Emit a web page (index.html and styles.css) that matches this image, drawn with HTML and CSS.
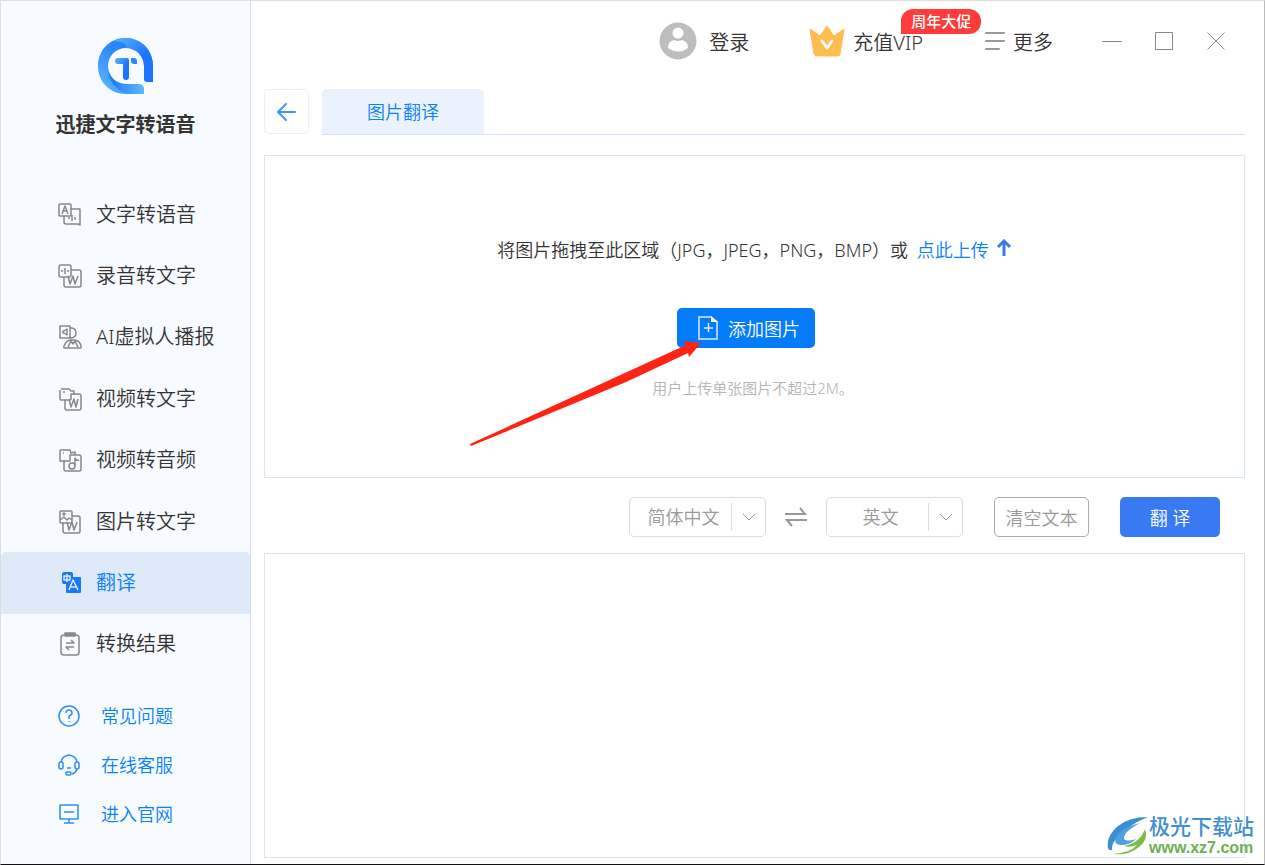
FILE: index.html
```html
<!DOCTYPE html>
<html lang="zh-CN">
<head>
<meta charset="utf-8">
<title>迅捷文字转语音</title>
<link rel="stylesheet" href="styles.css">
</head>
<body>
<div class="window">
  <aside class="sidebar">
    <div class="brand">
      <svg class="logo" viewBox="0 0 56 56" aria-hidden="true">
        <defs>
          <linearGradient id="ring" x1="0" y1="1" x2="1" y2="0">
            <stop offset="0" stop-color="#62bdff"/><stop offset=".55" stop-color="#2a86fa"/><stop offset="1" stop-color="#1b78fa"/>
          </linearGradient>
          <linearGradient id="cap" x1="0" y1="0" x2="1" y2="1">
            <stop offset="0" stop-color="#5ab6ff"/><stop offset=".6" stop-color="#1b74fb"/>
          </linearGradient>
          <linearGradient id="tail" x1="0" y1="0" x2="1" y2="0">
            <stop offset="0" stop-color="#1673fa"/><stop offset="1" stop-color="#60bbff"/>
          </linearGradient>
        </defs>
        <path fill="url(#ring)" d="M27 0C12 0 0 12 0 28s12 28 28 28h18v-4q0-6-6-6H28C18 46 10 38 10 28S18 10 28 10s18 8 18 18v13q0 3 4 3h5V28C55 12 43 0 27 0z"/>
        <path fill="url(#cap)" d="M16 3Q22 0 28 0c15 0 27 12 27 28v16h-5q-4 0-4-4V28c0-10-8-18-18-18Q30 4 16 3z"/>
        <path fill="url(#tail)" d="M10 30c1 9 8 16 18 16h12q6 0 6 6v4H29Q11 49 10 30z"/>
        <path fill="url(#cap)" d="M20 20h9q2 0 2 2v17q0 3-3 3t-3-3V26h-5q-3 0-3-3t3-3z"/>
        <path fill="#2e86fa" d="M33 20h3q3 0 3 3v3h-3q-3 0-3-3z"/>
      </svg>
      <h1 class="brand-name">迅捷文字转语音</h1>
    </div>
    <nav class="menu">
      <a class="item" href="#tts"><svg class="icon" viewBox="0 0 24 24"><rect x="1" y="1" width="12" height="12" rx="1"/><path d="M4 11l3-8 3 8M5 8h4M13 6h9v16l-2-1H8q-2 0-2-2v-6M11 14v2M14 12v6M17 14v3"/></svg>文字转语音</a>
      <a class="item" href="#stt"><svg class="icon" viewBox="0 0 24 24"><rect x="1" y="1" width="12" height="12" rx="2"/><path d="M4 6v2M7 4v6M10 6v2M13 6h8q2 0 2 2v13q0 2-2 2H8q-2 0-2-2v-8M10 12l2 8 3-8 2 8 3-8"/></svg>录音转文字</a>
      <a class="item" href="#avatar"><svg class="icon" viewBox="0 0 24 24"><path d="M12 13H2V1h10zM9 4v6L6 8H5V6h1zM12 3h2q4 1 4 5 0 5-6 5M7 23q-2 0-1-2 2-5 6-6h5q5 1 6 6 1 2-1 2zM10 22l3-6 2 3 2-3 3 6"/></svg>AI虚拟人播报</a>
      <a class="item" href="#vtt"><svg class="icon" viewBox="0 0 24 24"><path d="M3 2h8l2 2h3v4M2 3v9q0 1 1 1h4M5 5h2"/><path d="M13 7h8q2 0 2 2v12q0 2-2 2H9q-2 0-2-2v-8h5q1 0 1-1zM11 12l2 8 3-8 2 8 2-8"/></svg>视频转文字</a>
      <a class="item" href="#vta"><svg class="icon" viewBox="0 0 24 24"><path d="M2 2h10l1 3 4-1v3M2 2v11h5M5 5h1"/><path d="M12 7h9q2 0 2 2v12q0 2-2 2H8q-2 0-2-2v-8h6zM17 18v-8q1 3 4 2"/><circle cx="14" cy="18" r="3"/></svg>视频转音频</a>
      <a class="item" href="#ocr"><svg class="icon" viewBox="0 0 24 24"><rect x="2" y="1" width="12" height="12" rx="1"/><circle cx="6" cy="4" r="1"/><path d="M2 10l4-3 3 3 2-2 3 2M14 6h6q2 0 2 2v13q0 2-2 2H7q-2 0-2-2v-8M9 12l2 8 3-8 2 8 3-8"/></svg>图片转文字</a>
      <a class="item active" href="#translate" aria-current="page"><svg class="icon" viewBox="0 0 24 24"><path class="solid" d="M6 1h7q2 0 2 2v3h7q1 0 1 1v14q0 1-1 1H9q-1 0-1-1v-8H6q-2 0-2-2V3q0-2 2-2z"/><path class="cut" d="M9 3v8M6 5h6v4H6zM11 19l4-10 5 10M13 16h5"/></svg>翻译</a>
      <a class="item" href="#results"><svg class="icon" viewBox="0 0 24 24"><rect x="3" y="3" width="18" height="20" rx="3"/><path class="grey" d="M7 1h10v3H7z"/><path d="M8 11h8l-3-3M16 15H8l3 3"/></svg>转换结果</a>
    </nav>
    <div class="help">
      <a class="help-link" href="#faq"><svg class="icon" viewBox="0 0 24 24"><circle cx="12" cy="12" r="10"/><path d="M9 9q0-3 3-3t3 3q0 2-3 3v3M12 17v1"/></svg>常见问题</a>
      <a class="help-link" href="#service"><svg class="icon" viewBox="0 0 24 24"><path d="M4 9q1-6 8-7 7 1 8 7M20 16q-1 4-5 5M10 15h4"/><rect x="2" y="9" width="4" height="7" rx="2"/><rect x="18" y="9" width="4" height="7" rx="2"/><rect x="9" y="19" width="5" height="3" rx="1"/></svg>在线客服</a>
      <a class="help-link" href="#site"><svg class="icon" viewBox="0 0 24 24"><path d="M3 3h18v14H3zM7 10h10M12 17v4M7 21h10"/></svg>进入官网</a>
    </div>
  </aside>

  <main class="main">
    <header class="topbar">
      <button class="top-btn login" type="button"><svg width="38" height="38" viewBox="0 0 38 38"><circle cx="19" cy="19" r="18.500" fill="#bdbdbd"/><circle cx="19" cy="11" r="5.500" fill="#fff"/><path fill="#fff" d="M9 26q0-7 6-8 4 2 8 0 6 1 6 8-9 7-20 0z"/></svg>登录</button>
      <button class="top-btn vip" type="button"><svg width="36" height="32" viewBox="0 0 36 32"><path fill="#ffbd4f" stroke="#ffbd4f" stroke-linejoin="round" d="M1 4l10 7 7-10 7 10 10-7-4 25q0 2-3 2H8q-2 0-3-2z"/><path fill="none" stroke="#fff" stroke-width="3" stroke-linecap="round" stroke-linejoin="round" d="M13 16l5 7 5-7"/></svg>充值VIP<span class="promo">周年大促</span></button>
      <button class="top-btn more" type="button"><svg width="20" height="20" viewBox="0 0 20 20"><path fill="none" stroke="#999" stroke-width="2" stroke-linecap="round" d="M1 2h18M1 10h18M1 18h13"/></svg>更多</button>
      <div class="controls">
        <button class="win-btn" type="button" aria-label="最小化"><svg width="20" height="20"><path d="M0 10.500h20"/></svg></button>
        <button class="win-btn" type="button" aria-label="最大化"><svg width="20" height="20"><path d="M1.500 1.500h17v17h-17z"/></svg></button>
        <button class="win-btn" type="button" aria-label="关闭"><svg width="20" height="20"><path d="M1.500 1.500l17 17M18.500 1.500l-17 17"/></svg></button>
      </div>
    </header>

    <div class="tabs">
      <button class="back" type="button" aria-label="返回"><svg width="20" height="20" viewBox="0 0 20 20"><path fill="none" stroke="#3d94fb" stroke-width="2" stroke-linecap="round" stroke-linejoin="round" d="M18 10H2M9 2l-8 8 8 8"/></svg></button>
      <div class="tab-strip"><button class="tab" type="button">图片翻译</button></div>
    </div>

    <section class="drop">
      <p class="hint">将图片拖拽至此区域（JPG，JPEG，PNG，BMP）或 <a class="upload" href="#upload">点此上传<svg width="16" height="18" viewBox="0 0 16 18"><path fill="none" stroke="#3b7bf0" stroke-width="3" d="M8 17V3M2 8l6-6 6 6"/></svg></a></p>
      <button class="add" type="button"><svg width="20" height="24" viewBox="0 0 20 24"><path fill="none" stroke="#d8eaff" stroke-width="1.500" d="M1 1h12l6 5v17H1zM6 12h9M10.500 7v9"/><path fill="#fff" d="M13 0l7 6h-7z"/></svg>添加图片</button>
      <p class="limit">用户上传单张图片不超过2M。</p>
      <svg class="pointer" width="232" height="106" viewBox="0 0 232 106" aria-hidden="true"><path fill="#ff2314" d="M0 104L216 5l-3-4 18 2-12 14-1-4L156 42 1 106z"/></svg>
    </section>

    <div class="actions">
      <label class="select"><select aria-label="源语言"><option>简体中文</option></select><svg class="chevron" width="14" height="8" viewBox="0 0 14 8"><path d="M1 1l6 6 6-6"/></svg></label>
      <button class="swap" type="button" aria-label="交换语言"><svg width="22" height="22" viewBox="0 0 22 22"><path fill="none" stroke="#999" stroke-width="2" d="M0 8h20l-5-6M22 14H2l5 6"/></svg></button>
      <label class="select"><select aria-label="目标语言"><option>英文</option></select><svg class="chevron" width="14" height="8" viewBox="0 0 14 8"><path d="M1 1l6 6 6-6"/></svg></label>
      <button class="clear" type="button">清空文本</button>
      <button class="go" type="button">翻 译</button>
    </div>

    <textarea class="result" aria-label="翻译结果"></textarea>
  </main>

  <div class="watermark">
    <svg width="42" height="40" viewBox="0 0 42 40" aria-hidden="true">
      <path fill="#3b8fd0" d="M41 1Q22 1 11 10-1 20 1 32q1 3 4 2-1-7 7-14Q23 8 41 1z"/>
      <path fill="#4aa3dc" d="M33 7Q15 11 9 21q-3 8 5 8 9 0 15-6-9 3-12 0-1-7 16-16z"/>
      <path fill="#7cbb4b" d="M38 13q4 10-6 18-11 9-26 7 17-1 24-9-7 3-13 1 16-3 21-17z"/>
    </svg>
    <div class="mark-text"><span class="mark-name">极光下载站</span><span class="mark-url">www.xz7.com</span></div>
  </div>
</div>
</body>
</html>
```
FILE: styles.css
```css
* { box-sizing: border-box; }

body {
  margin: 0;
  font-family: "Noto Sans", "Noto Sans CJK SC", sans-serif;
  font-weight: 350;
  color: #333;
  background: #fff;
}

h1, p { margin: 0; }
a { color: inherit; text-decoration: none; }
svg { flex: none; }
button, select, textarea { font: inherit; color: inherit; }
button { padding: 0; border: 0; background: none; cursor: pointer; }

.window {
  position: relative;
  display: flex;
  min-height: 100vh;
  border: 1px solid #ddd;
  border-right-color: #bbb;
  border-bottom-color: #111;
}

.sidebar {
  flex: none;
  width: 250px;
  background: #f7faff;
  border-right: 1px solid #cfe1f5;
}

.brand {
  display: flex;
  flex-direction: column;
  align-items: center;
  gap: 17px;
  padding-top: 37px;
}
.logo { width: 56px; height: 56px; }
.brand-name { font-size: 20px; line-height: 28px; font-weight: 700; }

.menu {
  display: grid;
  grid-auto-rows: 1fr;
  height: 491px;
  margin-top: 45px;
}
.item {
  display: flex;
  align-items: center;
  gap: 14px;
  padding-left: 57px;
  font-size: 20px;
  line-height: 28px;
}
.item.active {
  color: #0a80fa;
  background: #dfeaf8;
  border-radius: 5px 5px 0 0;
}

.icon {
  width: 24px;
  height: 24px;
  fill: none;
  stroke: #888;
  stroke-width: 1.5;
  stroke-linejoin: round;
}
.icon .solid { fill: #1677ff; stroke: none; }
.icon .cut { stroke: #dfeaf8; }
.icon .grey { fill: #888; }

.help {
  display: flex;
  flex-direction: column;
  gap: 21px;
  padding: 27px 0 0 56px;
}
.help-link {
  display: flex;
  align-items: center;
  gap: 20px;
  font-size: 18px;
  line-height: 28px;
  color: #0a80fa;
}
.help-link .icon { stroke: #2e8cf8; }

.main {
  flex: 1;
  min-width: 0;
  display: flex;
  flex-direction: column;
  padding: 0 19px 6px 13px;
}

.topbar {
  display: flex;
  justify-content: flex-end;
  height: 88px;
  padding: 16px 19px 0 0;
}
.top-btn {
  position: relative;
  display: flex;
  align-items: center;
  height: 48px;
  font-size: 20px;
}
.login { gap: 12px; }
.vip { gap: 8px; margin-left: 60px; }
.more { gap: 8px; margin-left: 62px; }
.promo {
  position: absolute;
  left: 92px;
  top: -8px;
  width: 80px;
  border-radius: 12px 12px 12px 0;
  background: #ff3b3b;
  color: #fff;
  font-size: 15px;
  line-height: 25px;
  font-weight: 500;
  text-align: center;
}
.controls {
  display: flex;
  align-items: center;
  gap: 32px;
  height: 48px;
  margin-left: 49px;
}
.win-btn { display: flex; }
.win-btn path { fill: none; stroke: #888; }

.tabs { display: flex; gap: 13px; }
.back {
  display: grid;
  place-items: center;
  width: 45px;
  height: 45px;
  border: 1px solid #e6f0fd;
  border-radius: 5px;
}
.tab-strip { flex: 1; display: flex; border-bottom: 1px solid #cfe1f8; }
.tab {
  width: 162px;
  height: 45px;
  padding-bottom: 2px;
  border-radius: 5px 5px 0 0;
  background: #eaf2fe;
  color: #0a80fa;
  font-size: 18px;
}

.drop {
  position: relative;
  display: flex;
  flex-direction: column;
  align-items: center;
  margin-top: 20px;
  padding: 80px 0 76px;
  border: 1px solid #d8e6f6;
}
.hint { font-size: 18px; line-height: 28px; }
.upload { margin-left: 4px; color: #0a80fa; }
.upload svg { margin-left: 7px; }
.add {
  display: flex;
  align-items: center;
  gap: 10px;
  width: 138px;
  height: 40px;
  margin: 44px 17px 28px 0;
  padding-left: 21px;
  border-radius: 5px;
  background: #047bf8;
  color: #fff;
  font-size: 18px;
}
.limit { margin-right: 3px; color: #b4b4b4; font-size: 15px; line-height: 25px; }
.pointer { position: absolute; left: 205px; top: 184px; }

.actions {
  display: flex;
  align-items: center;
  justify-content: flex-end;
  padding: 19px 25px 16px 0;
  color: #999;
  font-size: 18px;
}
.select { position: relative; width: 137px; height: 40px; }
.select select {
  appearance: none;
  width: 100%;
  height: 100%;
  padding: 0 34px 0 6px;
  border: 1px solid #ddd;
  border-radius: 5px;
  background: linear-gradient(#ddd, #ddd) right 33px center / 1px 28px no-repeat #fff;
  text-align-last: center;
}
.chevron { position: absolute; right: 10px; top: 16px; pointer-events: none; }
.chevron path { fill: none; stroke: #999; }
.swap { display: flex; margin: 0 19px; }
.clear {
  width: 95px;
  height: 40px;
  margin: 0 31px;
  border: 1px solid #aaa;
  border-radius: 5px;
}
.go {
  width: 100px;
  height: 40px;
  border-radius: 5px;
  background: #397af2;
  color: #fff;
}

.result {
  flex: 1;
  width: 100%;
  min-height: 160px;
  padding: 12px;
  border: 1px solid #d8e6f6;
  background: #fff;
  outline: 0;
  resize: none;
}

.watermark {
  position: absolute;
  right: 10px;
  bottom: 7px;
  display: flex;
  align-items: center;
  pointer-events: none;
}
.mark-text { display: flex; flex-direction: column; }
.mark-name { color: #3f8fd2; font-size: 21px; line-height: 25px; font-weight: 500; }
.mark-url { color: #6cb052; font-family: "Liberation Sans", sans-serif; font-size: 16px; line-height: 18px; font-weight: 700; }
```
